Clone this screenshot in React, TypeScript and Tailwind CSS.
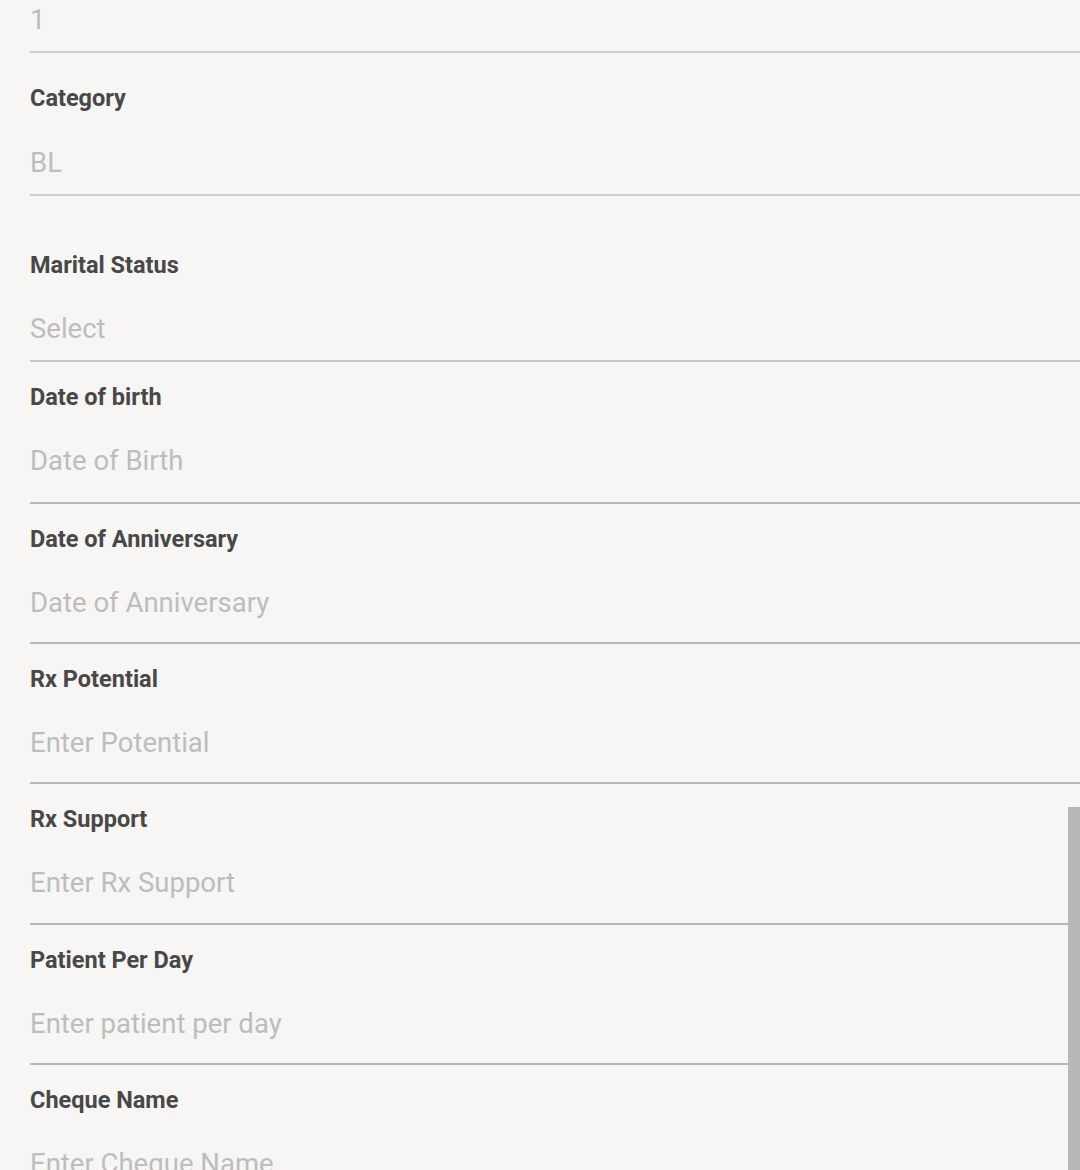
const fields = [
  { label: "Date of birth", placeholder: "Date of Birth", pb: "pb-[25px]" },
  { label: "Date of Anniversary", placeholder: "Date of Anniversary", pb: "pb-[23px]" },
  { label: "Rx Potential", placeholder: "Enter Potential", pb: "pb-[23px]" },
  { label: "Rx Support", placeholder: "Enter Rx Support", pb: "pb-[24px]" },
  { label: "Patient Per Day", placeholder: "Enter patient per day", pb: "pb-[23px]" },
];

function Label({ children }: { children: React.ReactNode }) {
  return (
    <div className="h-[26px] flex items-center text-[23.5px] font-bold text-[#484848] leading-none whitespace-nowrap">
      {children}
    </div>
  );
}

function Value({ children }: { children: React.ReactNode }) {
  return (
    <div className="h-[32px] flex items-center text-[27.5px] text-[#bdbdbd] leading-none whitespace-nowrap">
      {children}
    </div>
  );
}

export default function App() {
  return (
    <div
      className="relative h-[1170px] w-[1080px] overflow-hidden bg-[#f7f6f4]"
      style={{ fontFamily: "Roboto, 'Noto Sans', sans-serif" }}
    >
      <div className="pl-[30px]">
        {/* current value row */}
        <div className="pt-[4px] pb-[15px] border-b-2 border-[#cfcfcf]">
          <Value>1</Value>
        </div>

        {/* Category */}
        <div className="pt-[33px] pb-[15px] border-b-2 border-[#cfcfcf]">
          <Label>Category</Label>
          <div className="mt-[35px]">
            <Value>BL</Value>
          </div>
        </div>

        {/* Marital Status */}
        <div className="pt-[57px] pb-[15px] border-b-2 border-[#c8c8c8]">
          <Label>Marital Status</Label>
          <div className="mt-[34px]">
            <Value>Select</Value>
          </div>
        </div>

        {fields.map((f) => (
          <div key={f.label} className={`pt-[23px] ${f.pb} border-b-2 border-[#b8b8b8]`}>
            <Label>{f.label}</Label>
            <div className="mt-[34px]">
              <Value>{f.placeholder}</Value>
            </div>
          </div>
        ))}

        {/* Cheque Name */}
        <div className="pt-[23px] pb-[23px]">
          <Label>Cheque Name</Label>
          <div className="mt-[34px]">
            <Value>Enter Cheque Name</Value>
          </div>
        </div>
      </div>

      {/* scrollbar thumb */}
      <div className="absolute right-0 top-[807px] bottom-0 w-[12px] bg-[#b8b8b8]" />
    </div>
  );
}
